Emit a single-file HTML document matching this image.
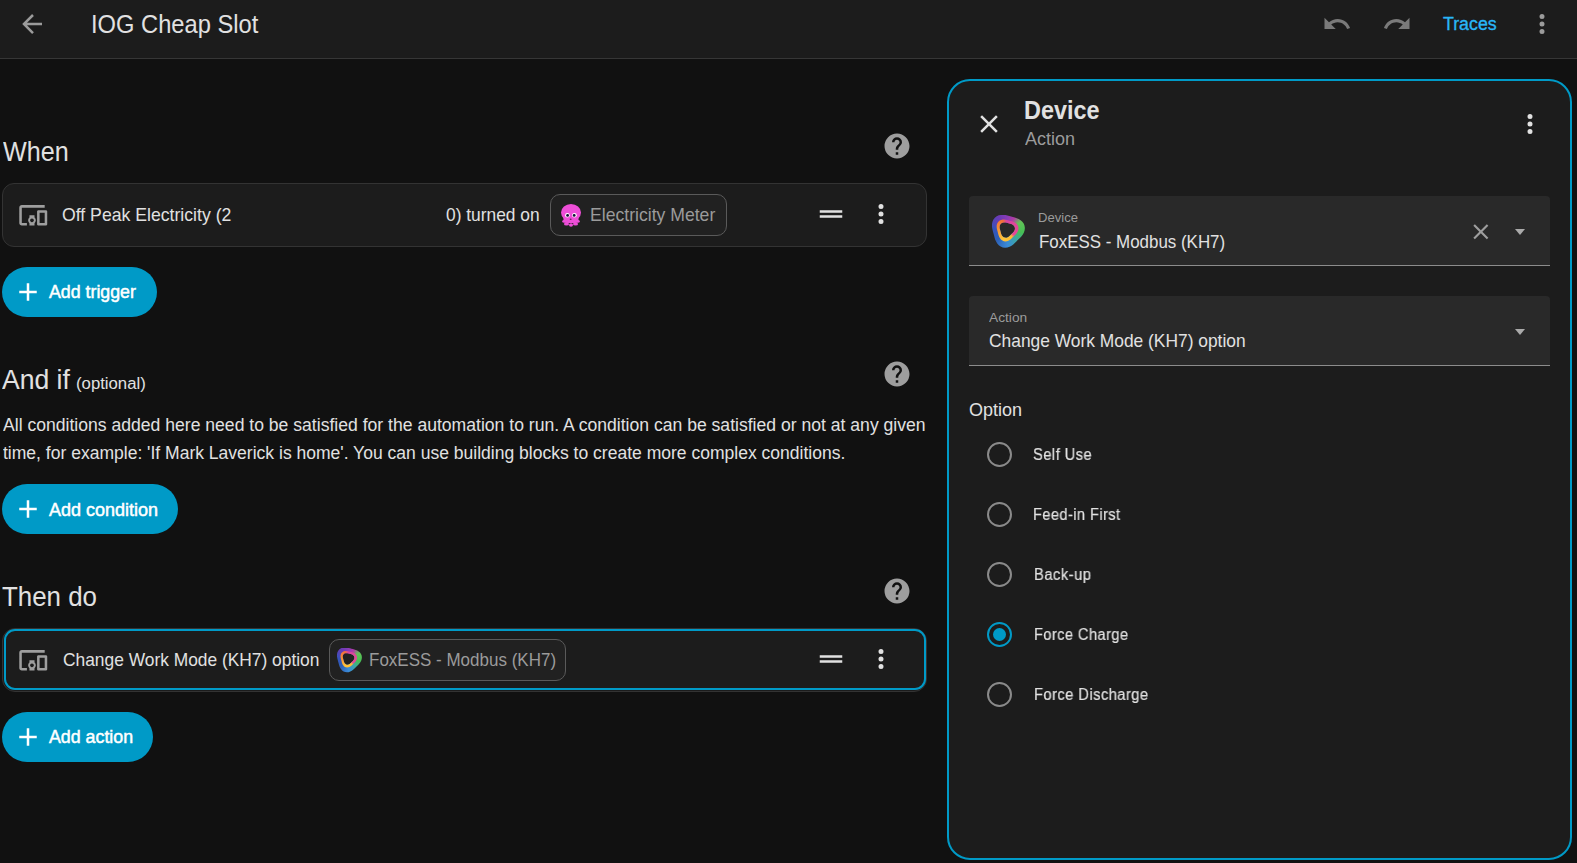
<!DOCTYPE html>
<html><head><meta charset="utf-8">
<style>
html,body{margin:0;padding:0;}
body{width:1577px;height:863px;overflow:hidden;background:#111111;position:relative;font-family:"Liberation Sans",sans-serif;color:#e1e1e1;}
.a{position:absolute;}
.t{position:absolute;white-space:nowrap;}
svg.i{position:absolute;overflow:visible;}
#hdr{left:0;top:0;width:1577px;height:58px;background:#1c1c1c;border-bottom:1px solid #363636;}
.card{position:absolute;background:#1c1c1c;border:1px solid #333333;border-radius:12px;box-sizing:border-box;}
.btn{position:absolute;background:#009ac7;border-radius:25px;height:50px;}
.chip{position:absolute;background:#212121;border:1px solid #5a5a5a;border-radius:10px;box-sizing:border-box;height:42px;}
#panel{left:947px;top:79px;width:625px;height:781px;box-sizing:border-box;border:2.5px solid #009ac7;border-radius:23px;background:#1c1c1c;}
.fld{position:absolute;left:969px;width:581px;background:#292929;border-radius:4px 4px 0 0;border-bottom:1px solid #8c8c8c;box-sizing:border-box;}
.radio{position:absolute;left:987px;width:25px;height:25px;box-sizing:border-box;border:2.5px solid #8a8a8a;border-radius:50%;}
</style></head>
<body>
<div id="hdr" class="a"></div>
<!-- back arrow -->
<svg class="i" style="left:17px;top:9px" width="30" height="30" viewBox="0 0 24 24"><path fill="#9b9b9b" d="M20,11V13H8L13.5,18.5L12.08,19.92L4.16,12L12.08,4.08L13.5,5.5L8,11H20Z"/></svg>
<div class="t" id="t_title" style="left:91.40px;top:11.00px;font-size:26px;line-height:26px;transform-origin:0 0;transform:scaleX(0.9116);">IOG Cheap Slot</div>
<!-- undo / redo -->
<svg class="i" style="left:1321.5px;top:9px" width="30" height="30" viewBox="0 0 24 24"><path fill="#7a7a7a" d="M12.5,8C9.85,8 7.45,9 5.6,10.6L2,7V16H11L7.38,12.38C8.77,11.22 10.54,10.5 12.5,10.5C16.04,10.5 19.05,12.81 20.1,16L22.47,15.22C21.08,11.03 17.15,8 12.5,8Z"/></svg>
<svg class="i" style="left:1382px;top:9px" width="30" height="30" viewBox="0 0 24 24"><path fill="#7a7a7a" d="M18.4,10.6C16.55,9 14.15,8 11.5,8C6.85,8 2.92,11.03 1.54,15.22L3.9,16C4.95,12.81 7.95,10.5 11.5,10.5C13.45,10.5 15.23,11.22 16.62,12.38L13,16H22V7L18.4,10.6Z"/></svg>
<div class="t" id="t_traces" style="left:1443.00px;top:15.00px;font-size:18.8px;line-height:18.8px;color:#29b6f6;-webkit-text-stroke:0.35px #29b6f6;transform-origin:0 0;transform:scaleX(0.9464);">Traces</div>
<svg class="i" style="left:1527px;top:9px" width="30" height="30" viewBox="0 0 24 24"><path fill="#9b9b9b" d="M12,16A2,2 0 0,1 14,18A2,2 0 0,1 12,20A2,2 0 0,1 10,18A2,2 0 0,1 12,16M12,10A2,2 0 0,1 14,12A2,2 0 0,1 12,14A2,2 0 0,1 10,12A2,2 0 0,1 12,10M12,4A2,2 0 0,1 14,6A2,2 0 0,1 12,8A2,2 0 0,1 10,6A2,2 0 0,1 12,4Z"/></svg>

<!-- WHEN -->
<div class="t" id="t_when" style="left:2.80px;top:138.00px;font-size:28px;line-height:28px;transform-origin:0 0;transform:scaleX(0.8972);">When</div>
<svg class="i" style="left:882px;top:131px" width="30" height="30" viewBox="0 0 24 24"><path fill="#9e9e9e" d="M15.07,11.25L14.17,12.17C13.45,12.89 13,13.5 13,15H11V14.5C11,13.39 11.45,12.39 12.17,11.67L13.41,10.41C13.78,10.05 14,9.55 14,9C14,7.89 13.1,7 12,7A2,2 0 0,0 10,9H8A4,4 0 0,1 12,5A4,4 0 0,1 16,9C16,9.88 15.64,10.67 15.07,11.25M13,19H11V17H13M12,2A10,10 0 0,0 2,12A10,10 0 0,0 12,22A10,10 0 0,0 22,12C22,6.47 17.5,2 12,2Z"/></svg>

<div class="card" style="left:2px;top:183px;width:925px;height:64px;"></div>
<svg class="i" style="left:17.7px;top:199.9px" width="30.5" height="30.5" viewBox="0 0 24 24"><path fill="#9e9e9e" d="M3 6H21V4H3C1.9 4 1 4.9 1 6V18C1 19.1 1.9 20 3 20H7V18H3V6M13 12H9V13.78C8.39 14.33 8 15.11 8 16C8 16.89 8.39 17.67 9 18.22V20H13V18.22C13.610 17.67 14 16.88 14 16S13.61 14.33 13 13.78V12M11 17.5C10.17 17.5 9.5 16.83 9.5 16S10.17 14.5 11 14.5 12.5 15.17 12.5 16 11.83 17.5 11 17.5M22 8H16C15.5 8 15 8.5 15 9V19C15 19.5 15.5 20 16 20H22C22.5 20 23 19.5 23 19V9C23 8.5 22.5 8 22 8M21 18H17V10H21V18Z"/></svg>
<div class="t" id="t_off" style="left:62.40px;top:205.00px;font-size:19px;line-height:19px;transform-origin:0 0;transform:scaleX(0.9287);">Off Peak Electricity (2</div>
<div class="t" id="t_turned" style="left:445.70px;top:205.00px;font-size:19px;line-height:19px;transform-origin:0 0;transform:scaleX(0.9138);">0) turned on</div>
<div class="chip" style="left:550px;top:194px;width:177px;"></div>
<svg class="i" style="left:561px;top:204px" width="21" height="23" viewBox="0 0 21 23"><g fill="#ee4ed8"><ellipse cx="10" cy="8.6" rx="10" ry="8.6"/><rect x="2.5" y="9" width="15" height="10" rx="3"/><ellipse cx="3.2" cy="17.4" rx="2" ry="1.3"/><ellipse cx="16.8" cy="17.4" rx="2" ry="1.3"/><ellipse cx="5.5" cy="20" rx="2.6" ry="1.6"/><ellipse cx="14.5" cy="20" rx="2.6" ry="1.6"/><ellipse cx="10" cy="21" rx="2" ry="1.8"/></g><circle cx="6.4" cy="11.3" r="2.3" fill="#fff"/><circle cx="13.4" cy="11.3" r="2.3" fill="#fff"/><circle cx="6.6" cy="11.4" r="1.4" fill="#101035"/><circle cx="13.2" cy="11.4" r="1.4" fill="#101035"/><ellipse cx="9.7" cy="15.2" rx="1" ry="0.7" fill="#6a2060"/></svg>
<div class="t" id="t_emeter" style="left:590.20px;top:205.00px;font-size:19px;line-height:19px;color:#9b9b9b;transform-origin:0 0;transform:scaleX(0.9269);">Electricity Meter</div>
<svg class="i" style="left:816.25px;top:198.85px" width="30" height="30" viewBox="0 0 24 24"><path fill="#e1e1e1" d="M21,11H3V9H21V11M21,13H3V15H21V13Z"/></svg>
<svg class="i" style="left:866px;top:199px" width="30" height="30" viewBox="0 0 24 24"><path fill="#e1e1e1" d="M12,16A2,2 0 0,1 14,18A2,2 0 0,1 12,20A2,2 0 0,1 10,18A2,2 0 0,1 12,16M12,10A2,2 0 0,1 14,12A2,2 0 0,1 12,14A2,2 0 0,1 10,12A2,2 0 0,1 12,10M12,4A2,2 0 0,1 14,6A2,2 0 0,1 12,8A2,2 0 0,1 10,6A2,2 0 0,1 12,4Z"/></svg>

<div class="btn" style="left:2px;top:267px;width:155px;"></div>
<svg class="i" style="left:13px;top:277px" width="30" height="30" viewBox="0 0 24 24"><path fill="#ffffff" d="M19,13H13V19H11V13H5V11H11V5H13V11H19V13Z"/></svg>
<div class="t" id="t_addtrig" style="left:48.50px;top:282.70px;font-size:18.5px;line-height:18.5px;color:#fff;-webkit-text-stroke:0.5px #fff;transform-origin:0 0;transform:scaleX(0.9604);">Add trigger</div>

<!-- AND IF -->
<div class="t" id="t_andif" style="left:2.40px;top:366.00px;font-size:28px;line-height:28px;transform-origin:0 0;transform:scaleX(0.9483);">And if</div>
<div class="t" id="t_opt" style="left:76.20px;top:376.00px;font-size:16px;line-height:16px;transform-origin:0 0;transform:scaleX(1.0456);">(optional)</div>
<svg class="i" style="left:882px;top:359px" width="30" height="30" viewBox="0 0 24 24"><path fill="#9e9e9e" d="M15.07,11.25L14.17,12.17C13.45,12.89 13,13.5 13,15H11V14.5C11,13.39 11.45,12.39 12.17,11.67L13.41,10.41C13.78,10.05 14,9.55 14,9C14,7.89 13.1,7 12,7A2,2 0 0,0 10,9H8A4,4 0 0,1 12,5A4,4 0 0,1 16,9C16,9.88 15.64,10.67 15.07,11.25M13,19H11V17H13M12,2A10,10 0 0,0 2,12A10,10 0 0,0 12,22A10,10 0 0,0 22,12C22,6.47 17.5,2 12,2Z"/></svg>
<div class="t" id="t_p1" style="left:2.50px;top:416.00px;font-size:18.75px;line-height:18.75px;transform-origin:0 0;transform:scaleX(0.9376);">All conditions added here need to be satisfied for the automation to run. A condition can be satisfied or not at any given</div>
<div class="t" id="t_p2" style="left:2.50px;top:444.00px;font-size:18.75px;line-height:18.75px;transform-origin:0 0;transform:scaleX(0.9345);">time, for example: 'If Mark Laverick is home'. You can use building blocks to create more complex conditions.</div>

<div class="btn" style="left:2px;top:484px;width:176px;"></div>
<svg class="i" style="left:13px;top:494px" width="30" height="30" viewBox="0 0 24 24"><path fill="#ffffff" d="M19,13H13V19H11V13H5V11H11V5H13V11H19V13Z"/></svg>
<div class="t" id="t_addcond" style="left:48.80px;top:500.70px;font-size:18.5px;line-height:18.5px;color:#fff;-webkit-text-stroke:0.5px #fff;transform-origin:0 0;transform:scaleX(0.9714);">Add condition</div>

<!-- THEN DO -->
<div class="t" id="t_then" style="left:1.70px;top:583.00px;font-size:28px;line-height:28px;transform-origin:0 0;transform:scaleX(0.9248);">Then do</div>
<svg class="i" style="left:882px;top:576px" width="30" height="30" viewBox="0 0 24 24"><path fill="#9e9e9e" d="M15.07,11.25L14.17,12.17C13.45,12.89 13,13.5 13,15H11V14.5C11,13.39 11.45,12.39 12.17,11.67L13.41,10.41C13.78,10.05 14,9.55 14,9C14,7.89 13.1,7 12,7A2,2 0 0,0 10,9H8A4,4 0 0,1 12,5A4,4 0 0,1 16,9C16,9.88 15.64,10.67 15.07,11.25M13,19H11V17H13M12,2A10,10 0 0,0 2,12A10,10 0 0,0 12,22A10,10 0 0,0 22,12C22,6.47 17.5,2 12,2Z"/></svg>

<div class="card" style="left:2px;top:628px;width:925px;height:64px;border-color:#333333;border-radius:13px;"></div><div class="a" style="left:4px;top:629px;width:922px;height:61px;box-sizing:border-box;border:2px solid #009ac7;border-radius:11px;"></div>
<svg class="i" style="left:17.7px;top:644.9px" width="30.5" height="30.5" viewBox="0 0 24 24"><path fill="#9e9e9e" d="M3 6H21V4H3C1.9 4 1 4.9 1 6V18C1 19.1 1.9 20 3 20H7V18H3V6M13 12H9V13.78C8.39 14.33 8 15.11 8 16C8 16.89 8.39 17.67 9 18.22V20H13V18.22C13.610 17.67 14 16.88 14 16S13.61 14.33 13 13.78V12M11 17.5C10.17 17.5 9.5 16.83 9.5 16S10.17 14.5 11 14.5 12.5 15.17 12.5 16 11.830 17.5 11 17.5M22 8H16C15.5 8 15 8.5 15 9V19C15 19.5 15.5 20 16 20H22C22.5 20 23 19.5 23 19V9C23 8.5 22.5 8 22 8M21 18H17V10H21V18Z"/></svg>
<div class="t" id="t_change" style="left:62.80px;top:650.00px;font-size:19px;line-height:19px;transform-origin:0 0;transform:scaleX(0.9140);">Change Work Mode (KH7) option</div>
<div class="chip" style="left:329px;top:639px;width:237px;"></div>
<div class="a" style="left:337px;top:647.5px;width:25px;height:25px;background:conic-gradient(from 0deg at 46% 45%, #8a3cb8 0deg, #b23aa6 30deg, #62c257 60deg, #46bf55 100deg, #3aa6a8 140deg, #3a8ad8 180deg, #2d5fb5 225deg, #3553bb 275deg, #6a3ab5 325deg, #8a3cb8 360deg);clip-path:path(evenodd,'M24.73,11.59 L24.19,13.24 L23.37,14.73 L22.39,16.03 L21.35,17.18 L20.31,18.22 L19.29,19.22 L18.30,20.23 L17.26,21.27 L16.11,22.32 L14.80,23.30 L13.32,24.11 L11.67,24.65 L9.92,24.83 L8.18,24.59 L6.56,23.93 L5.13,22.90 L3.98,21.61 L3.10,20.16 L2.46,18.66 L1.99,17.18 L1.61,15.76 L1.25,14.38 L0.87,13.01 L0.49,11.59 L0.16,10.08 L-0.04,8.45 L-0.00,6.76 L0.35,5.06 L1.07,3.46 L2.15,2.08 L3.54,1.00 L5.13,0.28 L6.83,-0.08 L8.53,-0.12 L10.15,0.08 L11.67,0.41 L13.09,0.79 L14.46,1.17 L15.83,1.53 L17.26,1.91 L18.73,2.38 L20.24,3.02 L21.69,3.90 L22.98,5.06 L24.00,6.48 L24.66,8.11 L24.91,9.85 Z M17.29,11.06 L17.03,11.83 L16.63,12.51 L16.15,13.11 L15.66,13.63 L15.17,14.10 L14.70,14.55 L14.25,15.02 L13.78,15.50 L13.26,16.00 L12.66,16.48 L11.98,16.87 L11.21,17.14 L10.40,17.23 L9.59,17.13 L8.83,16.81 L8.17,16.33 L7.64,15.71 L7.25,15.02 L6.97,14.32 L6.77,13.63 L6.61,12.97 L6.45,12.34 L6.27,11.71 L6.08,11.06 L5.91,10.36 L5.80,9.61 L5.79,8.82 L5.95,8.02 L6.27,7.27 L6.77,6.62 L7.42,6.12 L8.17,5.79 L8.97,5.64 L9.76,5.65 L10.51,5.76 L11.21,5.93 L11.86,6.12 L12.49,6.30 L13.12,6.46 L13.78,6.62 L14.47,6.82 L15.18,7.10 L15.86,7.49 L16.48,8.02 L16.97,8.68 L17.28,9.44 L17.39,10.25 Z');"></div><div class="a" style="left:337px;top:647.5px;width:25px;height:25px;background:conic-gradient(from 0deg at 45% 45%, #d8449f 0deg, #e84896 125deg, #ffbb32 145deg, #ffc43a 200deg, #f89a33 260deg, #f0703a 335deg, #d8449f 358deg);clip-path:path(evenodd,'M19.94,11.21 L19.58,12.30 L19.04,13.29 L18.39,14.16 L17.70,14.91 L17.01,15.60 L16.34,16.27 L15.68,16.94 L14.99,17.63 L14.23,18.32 L13.37,18.97 L12.38,19.51 L11.29,19.87 L10.13,19.98 L8.98,19.82 L7.90,19.39 L6.96,18.71 L6.19,17.85 L5.61,16.89 L5.19,15.89 L4.87,14.91 L4.62,13.97 L4.38,13.06 L4.14,12.15 L3.88,11.21 L3.66,10.21 L3.53,9.13 L3.56,8.01 L3.79,6.88 L4.27,5.83 L4.98,4.91 L5.90,4.19 L6.96,3.72 L8.09,3.48 L9.21,3.46 L10.28,3.59 L11.29,3.81 L12.23,4.06 L13.14,4.31 L14.05,4.55 L14.99,4.80 L15.97,5.11 L16.97,5.53 L17.93,6.12 L18.78,6.88 L19.46,7.83 L19.90,8.91 L20.06,10.06 Z M17.29,11.06 L17.03,11.83 L16.63,12.51 L16.15,13.11 L15.66,13.63 L15.17,14.10 L14.70,14.55 L14.25,15.02 L13.78,15.50 L13.26,16.00 L12.66,16.48 L11.98,16.87 L11.21,17.14 L10.40,17.23 L9.59,17.13 L8.83,16.81 L8.17,16.33 L7.64,15.71 L7.25,15.02 L6.97,14.32 L6.77,13.63 L6.61,12.97 L6.45,12.34 L6.27,11.71 L6.08,11.06 L5.91,10.36 L5.80,9.61 L5.79,8.82 L5.95,8.02 L6.27,7.27 L6.77,6.62 L7.42,6.12 L8.17,5.79 L8.97,5.64 L9.76,5.65 L10.51,5.76 L11.21,5.93 L11.86,6.12 L12.49,6.30 L13.12,6.46 L13.78,6.62 L14.47,6.82 L15.18,7.10 L15.86,7.49 L16.48,8.02 L16.97,8.68 L17.28,9.44 L17.39,10.25 Z');"></div>
<div class="t" id="t_fox1" style="left:369.30px;top:650.00px;font-size:19px;line-height:19px;color:#9b9b9b;transform-origin:0 0;transform:scaleX(0.8947);">FoxESS - Modbus (KH7)</div>
<svg class="i" style="left:816.25px;top:644px" width="30" height="30" viewBox="0 0 24 24"><path fill="#e1e1e1" d="M21,11H3V9H21V11M21,13H3V15H21V13Z"/></svg>
<svg class="i" style="left:866px;top:644px" width="30" height="30" viewBox="0 0 24 24"><path fill="#e1e1e1" d="M12,16A2,2 0 0,1 14,18A2,2 0 0,1 12,20A2,2 0 0,1 10,18A2,2 0 0,1 12,16M12,10A2,2 0 0,1 14,12A2,2 0 0,1 12,14A2,2 0 0,1 10,12A2,2 0 0,1 12,10M12,4A2,2 0 0,1 14,6A2,2 0 0,1 12,8A2,2 0 0,1 10,6A2,2 0 0,1 12,4Z"/></svg>

<div class="btn" style="left:2px;top:712px;width:151px;"></div>
<svg class="i" style="left:13px;top:722px" width="30" height="30" viewBox="0 0 24 24"><path fill="#ffffff" d="M19,13H13V19H11V13H5V11H11V5H13V11H19V13Z"/></svg>
<div class="t" id="t_addact" style="left:48.50px;top:727.70px;font-size:18.5px;line-height:18.5px;color:#fff;-webkit-text-stroke:0.5px #fff;transform-origin:0 0;transform:scaleX(0.9615);">Add action</div>

<!-- PANEL -->
<div id="panel" class="a"></div>
<svg class="i" style="left:974px;top:109px" width="30" height="30" viewBox="0 0 24 24"><path fill="#e1e1e1" d="M19,6.41L17.59,5L12,10.59L6.41,5L5,6.41L10.59,12L5,17.59L6.41,19L12,13.41L17.59,19L19,17.59L13.41,12L19,6.41Z"/></svg>
<div class="t" id="t_devtitle" style="left:1024.00px;top:97.00px;font-size:26px;line-height:26px;font-weight:bold;transform-origin:0 0;transform:scaleX(0.9001);">Device</div>
<div class="t" id="t_actsub" style="left:1024.50px;top:130.00px;font-size:18.3px;line-height:18.3px;color:#9b9b9b;transform-origin:0 0;transform:scaleX(0.9849);">Action</div>
<svg class="i" style="left:1515px;top:109px" width="30" height="30" viewBox="0 0 24 24"><path fill="#e1e1e1" d="M12,16A2,2 0 0,1 14,18A2,2 0 0,1 12,20A2,2 0 0,1 10,18A2,2 0 0,1 12,16M12,10A2,2 0 0,1 14,12A2,2 0 0,1 12,14A2,2 0 0,1 10,12A2,2 0 0,1 12,10M12,4A2,2 0 0,1 14,6A2,2 0 0,1 12,8A2,2 0 0,1 10,6A2,2 0 0,1 12,4Z"/></svg>

<div class="fld" style="top:196px;height:70px;"></div>
<div class="a" style="left:992px;top:215px;width:33px;height:33px;background:conic-gradient(from 0deg at 46% 45%, #8a3cb8 0deg, #b23aa6 30deg, #62c257 60deg, #46bf55 100deg, #3aa6a8 140deg, #3a8ad8 180deg, #2d5fb5 225deg, #3553bb 275deg, #6a3ab5 325deg, #8a3cb8 360deg);clip-path:path(evenodd,'M32.64,15.30 L31.93,17.48 L30.85,19.44 L29.56,21.17 L28.18,22.68 L26.80,24.05 L25.47,25.37 L24.15,26.70 L22.78,28.08 L21.27,29.46 L19.54,30.75 L17.58,31.83 L15.40,32.54 L13.10,32.78 L10.80,32.45 L8.65,31.58 L6.78,30.23 L5.25,28.53 L4.09,26.61 L3.24,24.63 L2.62,22.68 L2.12,20.80 L1.65,18.99 L1.15,17.18 L0.64,15.30 L0.20,13.30 L-0.05,11.16 L-0.00,8.92 L0.47,6.68 L1.42,4.57 L2.84,2.74 L4.67,1.32 L6.78,0.37 L9.02,-0.10 L11.26,-0.15 L13.40,0.10 L15.40,0.54 L17.28,1.05 L19.09,1.55 L20.90,2.02 L22.78,2.52 L24.73,3.14 L26.71,3.99 L28.63,5.15 L30.33,6.68 L31.68,8.55 L32.55,10.70 L32.88,13.00 Z M22.83,14.60 L22.47,15.61 L21.95,16.52 L21.32,17.30 L20.66,17.99 L20.02,18.61 L19.40,19.20 L18.81,19.82 L18.19,20.46 L17.50,21.12 L16.72,21.75 L15.81,22.27 L14.80,22.63 L13.73,22.75 L12.65,22.61 L11.65,22.19 L10.79,21.55 L10.09,20.74 L9.57,19.83 L9.20,18.90 L8.94,17.99 L8.72,17.12 L8.51,16.29 L8.28,15.46 L8.03,14.60 L7.80,13.68 L7.65,12.68 L7.65,11.64 L7.85,10.59 L8.28,9.60 L8.94,8.74 L9.80,8.08 L10.79,7.65 L11.84,7.45 L12.88,7.45 L13.88,7.60 L14.80,7.83 L15.66,8.08 L16.49,8.31 L17.32,8.52 L18.19,8.74 L19.10,9.00 L20.03,9.37 L20.94,9.89 L21.75,10.59 L22.39,11.45 L22.81,12.45 L22.95,13.53 Z');"></div><div class="a" style="left:992px;top:215px;width:33px;height:33px;background:conic-gradient(from 0deg at 45% 45%, #d8449f 0deg, #e84896 125deg, #ffbb32 145deg, #ffc43a 200deg, #f89a33 260deg, #f0703a 335deg, #d8449f 358deg);clip-path:path(evenodd,'M26.32,14.80 L25.85,16.24 L25.14,17.54 L24.28,18.69 L23.37,19.69 L22.45,20.60 L21.57,21.47 L20.70,22.35 L19.79,23.27 L18.79,24.18 L17.64,25.04 L16.34,25.75 L14.90,26.22 L13.38,26.38 L11.85,26.17 L10.43,25.59 L9.19,24.69 L8.18,23.56 L7.40,22.30 L6.84,20.98 L6.43,19.69 L6.10,18.44 L5.79,17.24 L5.46,16.04 L5.12,14.80 L4.83,13.47 L4.66,12.06 L4.69,10.57 L5.01,9.09 L5.64,7.69 L6.58,6.48 L7.79,5.54 L9.19,4.91 L10.67,4.59 L12.16,4.56 L13.57,4.73 L14.90,5.02 L16.14,5.36 L17.34,5.69 L18.54,6.00 L19.79,6.33 L21.08,6.74 L22.40,7.30 L23.66,8.08 L24.79,9.09 L25.69,10.33 L26.27,11.75 L26.48,13.28 Z M22.83,14.60 L22.47,15.61 L21.95,16.52 L21.32,17.30 L20.66,17.99 L20.02,18.61 L19.40,19.20 L18.81,19.82 L18.19,20.46 L17.50,21.12 L16.72,21.75 L15.81,22.27 L14.80,22.63 L13.73,22.75 L12.65,22.61 L11.65,22.19 L10.79,21.55 L10.09,20.74 L9.57,19.83 L9.20,18.90 L8.94,17.99 L8.72,17.12 L8.51,16.29 L8.28,15.46 L8.03,14.60 L7.80,13.68 L7.65,12.68 L7.65,11.64 L7.85,10.59 L8.28,9.60 L8.94,8.74 L9.80,8.08 L10.79,7.65 L11.84,7.45 L12.88,7.45 L13.88,7.60 L14.80,7.83 L15.66,8.08 L16.49,8.31 L17.32,8.52 L18.19,8.74 L19.10,9.00 L20.03,9.37 L20.94,9.89 L21.75,10.59 L22.39,11.45 L22.81,12.45 L22.95,13.53 Z');"></div>
<div class="t" id="t_devlbl" style="left:1038.10px;top:211.00px;font-size:13px;line-height:13px;color:#9b9b9b;transform-origin:0 0;transform:scaleX(1.0054);">Device</div>
<div class="t" id="t_fox2" style="left:1038.60px;top:232.00px;font-size:19px;line-height:19px;transform-origin:0 0;transform:scaleX(0.8904);">FoxESS - Modbus (KH7)</div>
<svg class="i" style="left:1467.6px;top:218.8px" width="25.7" height="25.7" viewBox="0 0 24 24"><path fill="#9e9e9e" d="M19,6.41L17.59,5L12,10.59L6.41,5L5,6.41L10.59,12L5,17.59L6.41,19L12,13.41L17.59,19L19,17.59L13.41,12L19,6.41Z"/></svg>
<svg class="i" style="left:1515px;top:228.7px" width="10" height="6" viewBox="0 0 10 6"><path fill="#aaaaaa" d="M0,0H10L5,6Z"/></svg>

<div class="fld" style="top:296px;height:70px;"></div>
<div class="t" id="t_actlbl" style="left:988.70px;top:311.00px;font-size:13px;line-height:13px;color:#9b9b9b;transform-origin:0 0;transform:scaleX(1.0559);">Action</div>
<div class="t" id="t_change2" style="left:988.50px;top:331.00px;font-size:19px;line-height:19px;transform-origin:0 0;transform:scaleX(0.9147);">Change Work Mode (KH7) option</div>
<svg class="i" style="left:1515px;top:329px" width="10" height="6" viewBox="0 0 10 6"><path fill="#aaaaaa" d="M0,0H10L5,6Z"/></svg>

<div class="t" id="t_option" style="left:968.50px;top:401.00px;font-size:18px;line-height:18px;transform-origin:0 0;transform:scaleX(1.0004);">Option</div>

<div class="radio" style="top:442px;"></div>
<div class="t" id="t_r1" style="left:1033.30px;top:447.00px;font-size:16px;line-height:16px;transform-origin:0 0;transform:scaleX(0.9175);-webkit-text-stroke:0.2px #e1e1e1;will-change:transform;letter-spacing:0.5px;">Self Use</div>
<div class="radio" style="top:502px;"></div>
<div class="t" id="t_r2" style="left:1033.30px;top:507.00px;font-size:16px;line-height:16px;transform-origin:0 0;transform:scaleX(0.9095);-webkit-text-stroke:0.2px #e1e1e1;will-change:transform;letter-spacing:0.5px;">Feed-in First</div>
<div class="radio" style="top:562px;"></div>
<div class="t" id="t_r3" style="left:1033.60px;top:567.00px;font-size:16px;line-height:16px;transform-origin:0 0;transform:scaleX(0.9234);-webkit-text-stroke:0.2px #e1e1e1;will-change:transform;letter-spacing:0.5px;">Back-up</div>
<div class="radio" style="top:622px;border-color:#009ac7;"><div class="a" style="left:3.5px;top:3.5px;width:13px;height:13px;border-radius:50%;background:#009ac7;"></div></div>
<div class="t" id="t_r4" style="left:1033.50px;top:627.00px;font-size:16px;line-height:16px;transform-origin:0 0;transform:scaleX(0.9098);-webkit-text-stroke:0.2px #e1e1e1;will-change:transform;letter-spacing:0.5px;">Force Charge</div>
<div class="radio" style="top:682px;"></div>
<div class="t" id="t_r5" style="left:1033.50px;top:687.00px;font-size:16px;line-height:16px;transform-origin:0 0;transform:scaleX(0.9171);-webkit-text-stroke:0.2px #e1e1e1;will-change:transform;letter-spacing:0.5px;">Force Discharge</div>

</body></html>
